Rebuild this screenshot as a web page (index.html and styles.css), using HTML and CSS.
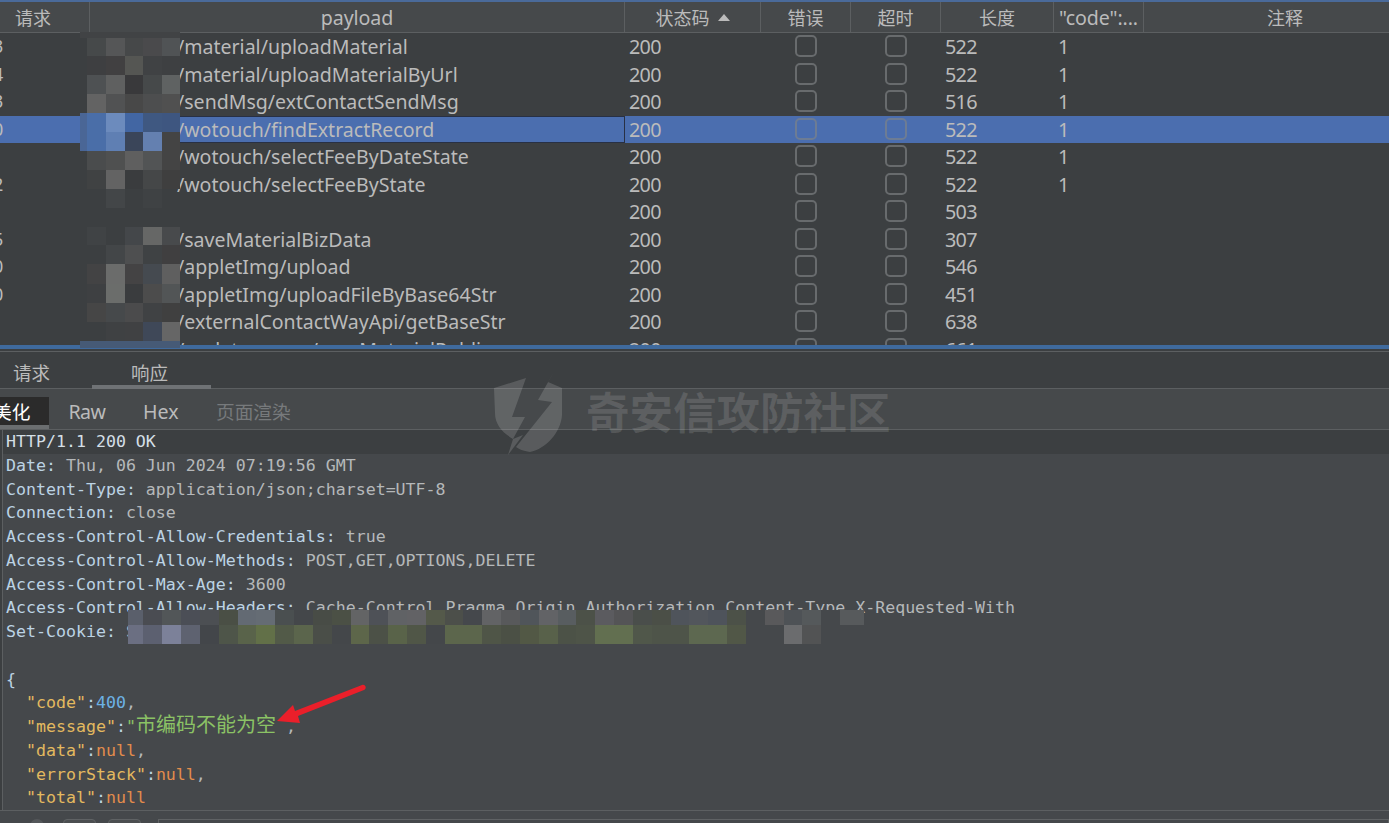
FILE: index.html
```html
<!DOCTYPE html>
<html lang="zh-CN">
<head>
<meta charset="utf-8">
<title>Intruder 结果</title>
<link rel="stylesheet" href="styles.css">
</head>
<body>
<div class="app">
  <div class="strip"></div>
  <section class="table">
    <div class="row head">
      <div class="th th-first">请求</div><div class="th lat">payload</div><div class="th sorted">状态码<i class="sort"></i></div><div class="th">错误</div><div class="th">超时</div><div class="th">长度</div><div class="th lat">"code":...</div><div class="th">注释</div>
    </div>
    <div class="row"><div class="td num"><span>3</span></div><div class="td path">/material/uploadMaterial</div><div class="td">200</div><div class="td box"><i></i></div><div class="td box"><i></i></div><div class="td">522</div><div class="td">1</div><div class="td"></div></div>
    <div class="row"><div class="td num"><span>4</span></div><div class="td path">/material/uploadMaterialByUrl</div><div class="td">200</div><div class="td box"><i></i></div><div class="td box"><i></i></div><div class="td">522</div><div class="td">1</div><div class="td"></div></div>
    <div class="row"><div class="td num"><span>3</span></div><div class="td path">/sendMsg/extContactSendMsg</div><div class="td">200</div><div class="td box"><i></i></div><div class="td box"><i></i></div><div class="td">516</div><div class="td">1</div><div class="td"></div></div>
    <div class="row selected"><div class="td num"><span>0</span></div><div class="td path focus">/wotouch/findExtractRecord</div><div class="td">200</div><div class="td box"><i></i></div><div class="td box"><i></i></div><div class="td">522</div><div class="td">1</div><div class="td"></div></div>
    <div class="row"><div class="td num"></div><div class="td path">/wotouch/selectFeeByDateState</div><div class="td">200</div><div class="td box"><i></i></div><div class="td box"><i></i></div><div class="td">522</div><div class="td">1</div><div class="td"></div></div>
    <div class="row"><div class="td num"><span>2</span></div><div class="td path">/wotouch/selectFeeByState</div><div class="td">200</div><div class="td box"><i></i></div><div class="td box"><i></i></div><div class="td">522</div><div class="td">1</div><div class="td"></div></div>
    <div class="row"><div class="td num"></div><div class="td path"></div><div class="td">200</div><div class="td box"><i></i></div><div class="td box"><i></i></div><div class="td">503</div><div class="td"></div><div class="td"></div></div>
    <div class="row"><div class="td num"><span>5</span></div><div class="td path">/saveMaterialBizData</div><div class="td">200</div><div class="td box"><i></i></div><div class="td box"><i></i></div><div class="td">307</div><div class="td"></div><div class="td"></div></div>
    <div class="row"><div class="td num"><span>0</span></div><div class="td path">/appletImg/upload</div><div class="td">200</div><div class="td box"><i></i></div><div class="td box"><i></i></div><div class="td">546</div><div class="td"></div><div class="td"></div></div>
    <div class="row"><div class="td num"><span>0</span></div><div class="td path">/appletImg/uploadFileByBase64Str</div><div class="td">200</div><div class="td box"><i></i></div><div class="td box"><i></i></div><div class="td">451</div><div class="td"></div><div class="td"></div></div>
    <div class="row"><div class="td num"></div><div class="td path">/externalContactWayApi/getBaseStr</div><div class="td">200</div><div class="td box"><i></i></div><div class="td box"><i></i></div><div class="td">638</div><div class="td"></div><div class="td"></div></div>
    <div class="row"><div class="td num"></div><div class="td path">/updatesource/saveMaterialPublic</div><div class="td">200</div><div class="td box"><i></i></div><div class="td box"><i></i></div><div class="td">661</div><div class="td"></div><div class="td"></div></div>
  </section>
  <div class="splitter"></div>
  <nav class="tabs">
    <span class="tab tab-req">请求</span>
    <span class="tab tab-res">响应</span>
  </nav>
  <nav class="subtabs">
    <span class="sub sub-on">美化</span>
    <span class="sub sub-raw">Raw</span>
    <span class="sub sub-hex">Hex</span>
    <span class="sub sub-off">页面渲染</span>
  </nav>
  <main class="editor">
    <div class="line first"><b class="h">HTTP/1.1 200 OK</b></div>
    <div class="line"><b class="k">Date:</b> Thu, 06 Jun 2024 07:19:56 GMT</div>
    <div class="line"><b class="k">Content-Type:</b> application/json;charset=UTF-8</div>
    <div class="line"><b class="k">Connection:</b> close</div>
    <div class="line"><b class="k">Access-Control-Allow-Credentials:</b> true</div>
    <div class="line"><b class="k">Access-Control-Allow-Methods:</b> POST,GET,OPTIONS,DELETE</div>
    <div class="line"><b class="k">Access-Control-Max-Age:</b> 3600</div>
    <div class="line"><b class="k">Access-Control-Allow-Headers:</b> Cache-Control,Pragma,Origin,Authorization,Content-Type,X-Requested-With</div>
    <div class="line"><b class="k">Set-Cookie:</b> S</div>
    <div class="line">&nbsp;</div>
    <div class="line"><b class="k">{</b></div>
    <div class="line">  <b class="y">"code"</b><b class="k">:</b><b class="n">400</b>,</div>
    <div class="line">  <b class="y">"message"</b><b class="k">:</b><b class="s">"<span class="cjk">市编码不能为空</span> </b>,</div>
    <div class="line">  <b class="y">"data"</b><b class="k">:</b><b class="o">null</b>,</div>
    <div class="line">  <b class="y">"errorStack"</b><b class="k">:</b><b class="o">null</b>,</div>
    <div class="line">  <b class="y">"total"</b><b class="k">:</b><b class="o">null</b></div>
  </main>
  <footer class="foot">
    <span class="fdot"></span><span class="fbtn"></span><span class="fbtn"></span><span class="finput"></span>
  </footer>

  <div class="wm-text">奇安信攻防社区</div>
  <svg class="overlay" viewBox="0 0 1389 823" aria-hidden="true">
    <g class="shield">
      <path d="M494 388L526 378L512 417L525 417L513 439C503 433 495 425 495 413Z"/>
      <path d="M556 368L548 382L562 388L562 415C561 432 546 449 530 452C523 451 519 449 516 447L552 402L538 400Z"/>
      <path d="M523 435L508 455L513 439Z"/>
    </g>
    <g>
      <rect x="80" y="32" width="100" height="6" fill="#414345"/>
      <rect x="87" y="38" width="19" height="18" fill="#46494a"/><rect x="106" y="38" width="19" height="18" fill="#555657"/><rect x="125" y="38" width="18" height="18" fill="#464849"/><rect x="143" y="38" width="19" height="18" fill="#4a4a4c"/><rect x="162" y="38" width="18" height="18" fill="#505355"/>
      <rect x="87" y="56" width="19" height="19" fill="#3e3f41"/><rect x="106" y="56" width="19" height="19" fill="#414041"/><rect x="125" y="56" width="18" height="19" fill="#555653"/><rect x="143" y="56" width="19" height="19" fill="#404244"/><rect x="162" y="56" width="18" height="19" fill="#3e4042"/>
      <rect x="87" y="75" width="19" height="19" fill="#4e5153"/><rect x="106" y="75" width="19" height="19" fill="#5f6060"/><rect x="125" y="75" width="18" height="19" fill="#39393b"/><rect x="143" y="75" width="19" height="19" fill="#46494a"/><rect x="162" y="75" width="18" height="19" fill="#5f6262"/>
      <rect x="87" y="94" width="19" height="19" fill="#636363"/><rect x="106" y="94" width="19" height="19" fill="#515253"/><rect x="125" y="94" width="18" height="19" fill="#484848"/><rect x="143" y="94" width="19" height="19" fill="#4d4e4f"/><rect x="162" y="94" width="18" height="19" fill="#505050"/>
      <rect x="80" y="113" width="7" height="38" fill="#4a6696"/>
      <rect x="87" y="113" width="19" height="19" fill="#4a6ea8"/><rect x="106" y="113" width="19" height="19" fill="#6c8bbd"/><rect x="125" y="113" width="18" height="19" fill="#4266a3"/><rect x="143" y="113" width="19" height="19" fill="#3f5881"/><rect x="162" y="113" width="18" height="19" fill="#3e5680"/>
      <rect x="87" y="132" width="19" height="19" fill="#4a6ea8"/><rect x="106" y="132" width="19" height="19" fill="#5f7fb3"/><rect x="125" y="132" width="18" height="19" fill="#3a4559"/><rect x="143" y="132" width="19" height="19" fill="#6480b0"/><rect x="162" y="132" width="18" height="19" fill="#444444"/>
      <rect x="87" y="151" width="19" height="19" fill="#4a4c4d"/><rect x="106" y="151" width="19" height="19" fill="#4f5050"/><rect x="125" y="151" width="18" height="19" fill="#5f5f5f"/><rect x="143" y="151" width="19" height="19" fill="#525455"/><rect x="162" y="151" width="18" height="19" fill="#444444"/>
      <rect x="87" y="170" width="19" height="19" fill="#404243"/><rect x="106" y="170" width="19" height="19" fill="#636363"/><rect x="125" y="170" width="18" height="19" fill="#3a3c3e"/><rect x="143" y="170" width="19" height="19" fill="#454748"/><rect x="162" y="170" width="18" height="19" fill="#3f3f3f"/>
      <rect x="106" y="189" width="19" height="19" fill="#434648"/><rect x="143" y="189" width="19" height="19" fill="#3f4244"/>
      <rect x="87" y="227" width="19" height="18" fill="#404345"/><rect x="125" y="227" width="18" height="18" fill="#44474a"/><rect x="143" y="227" width="19" height="18" fill="#666766"/><rect x="162" y="227" width="18" height="18" fill="#484a4c"/>
      <rect x="106" y="245" width="19" height="19" fill="#434648"/><rect x="125" y="245" width="18" height="19" fill="#4e4f50"/><rect x="143" y="245" width="19" height="19" fill="#3f4244"/><rect x="162" y="245" width="18" height="19" fill="#403f40"/>
      <rect x="87" y="264" width="19" height="20" fill="#434344"/><rect x="106" y="264" width="19" height="20" fill="#6b6c6b"/><rect x="125" y="264" width="18" height="20" fill="#444344"/><rect x="143" y="264" width="19" height="20" fill="#454a50"/><rect x="162" y="264" width="18" height="20" fill="#5f5f5f"/>
      <rect x="87" y="284" width="19" height="19" fill="#3e4042"/><rect x="106" y="284" width="19" height="19" fill="#6b6d6b"/><rect x="125" y="284" width="18" height="19" fill="#3a3c3e"/><rect x="143" y="284" width="19" height="19" fill="#4c4c4c"/><rect x="162" y="284" width="18" height="19" fill="#525556"/>
      <rect x="87" y="303" width="19" height="19" fill="#464646"/><rect x="106" y="303" width="19" height="19" fill="#46494b"/><rect x="125" y="303" width="18" height="19" fill="#4b4b4c"/><rect x="143" y="303" width="19" height="19" fill="#404244"/><rect x="162" y="303" width="18" height="19" fill="#404040"/>
      <rect x="106" y="322" width="19" height="19" fill="#3f4143"/><rect x="125" y="322" width="18" height="19" fill="#404143"/><rect x="143" y="322" width="19" height="19" fill="#3f4858"/><rect x="162" y="322" width="18" height="19" fill="#666666"/>
      <rect x="80" y="341" width="100" height="7" fill="#465a76"/>
    </g>
    <g>
      <rect x="128" y="610" width="15" height="15" fill="#5a5f6b"/><rect x="143" y="610" width="19" height="15" fill="#4a4c52"/><rect x="162" y="610" width="19" height="15" fill="#525658"/><rect x="181" y="610" width="19" height="15" fill="#4b4e56"/><rect x="200" y="610" width="19" height="15" fill="#4c4f53"/><rect x="219" y="610" width="19" height="15" fill="#4a4f45"/><rect x="238" y="610" width="18" height="15" fill="#636a73"/><rect x="256" y="610" width="19" height="15" fill="#656c74"/><rect x="275" y="610" width="19" height="15" fill="#4a4f50"/><rect x="294" y="610" width="19" height="15" fill="#44474a"/><rect x="313" y="610" width="19" height="15" fill="#484c46"/><rect x="332" y="610" width="19" height="15" fill="#4b5045"/><rect x="351" y="610" width="18" height="15" fill="#636465"/><rect x="369" y="610" width="19" height="15" fill="#4e5157"/><rect x="388" y="610" width="19" height="15" fill="#606265"/><rect x="407" y="610" width="19" height="15" fill="#626265"/><rect x="426" y="610" width="19" height="15" fill="#54594a"/><rect x="445" y="610" width="18" height="15" fill="#4c4f4a"/><rect x="463" y="610" width="19" height="15" fill="#45484c"/><rect x="482" y="610" width="19" height="15" fill="#626365"/><rect x="501" y="610" width="19" height="15" fill="#58595b"/><rect x="520" y="610" width="19" height="15" fill="#50555a"/><rect x="539" y="610" width="19" height="15" fill="#626366"/><rect x="558" y="610" width="18" height="15" fill="#585d60"/><rect x="576" y="610" width="19" height="15" fill="#4c5148"/><rect x="595" y="610" width="19" height="15" fill="#5b5b5f"/><rect x="614" y="610" width="19" height="15" fill="#545456"/><rect x="633" y="610" width="19" height="15" fill="#4a4e4b"/><rect x="652" y="610" width="19" height="15" fill="#4b4f47"/><rect x="671" y="610" width="18" height="15" fill="#4f545b"/><rect x="689" y="610" width="19" height="15" fill="#52565c"/><rect x="708" y="610" width="19" height="15" fill="#4e535b"/><rect x="727" y="610" width="19" height="15" fill="#4c5148"/><rect x="746" y="610" width="19" height="15" fill="#45484b"/><rect x="765" y="610" width="19" height="15" fill="#59595b"/><rect x="784" y="610" width="18" height="15" fill="#4e5256"/><rect x="802" y="610" width="19" height="15" fill="#55595b"/><rect x="821" y="610" width="19" height="15" fill="#45484b"/><rect x="840" y="610" width="24" height="15" fill="#575a5c"/>
      <rect x="128" y="625" width="15" height="19" fill="#6b6f82"/><rect x="143" y="625" width="19" height="19" fill="#5c6070"/><rect x="162" y="625" width="19" height="19" fill="#7c8199"/><rect x="181" y="625" width="19" height="19" fill="#5e6270"/><rect x="200" y="625" width="19" height="19" fill="#43464a"/><rect x="219" y="625" width="19" height="19" fill="#4e5549"/><rect x="238" y="625" width="18" height="19" fill="#59634a"/><rect x="256" y="625" width="19" height="19" fill="#627048"/><rect x="275" y="625" width="19" height="19" fill="#525a48"/><rect x="294" y="625" width="19" height="19" fill="#5b654c"/><rect x="313" y="625" width="19" height="19" fill="#4a4e48"/><rect x="332" y="625" width="19" height="19" fill="#44474a"/><rect x="351" y="625" width="18" height="19" fill="#5d664a"/><rect x="369" y="625" width="19" height="19" fill="#4c5147"/><rect x="388" y="625" width="19" height="19" fill="#596349"/><rect x="407" y="625" width="19" height="19" fill="#505647"/><rect x="426" y="625" width="19" height="19" fill="#44474a"/><rect x="445" y="625" width="37" height="19" fill="#5c664c"/><rect x="482" y="625" width="19" height="19" fill="#4f5547"/><rect x="501" y="625" width="19" height="19" fill="#4b5045"/><rect x="520" y="625" width="38" height="19" fill="#525845"/><rect x="539" y="625" width="19" height="19" fill="#58614a"/><rect x="558" y="625" width="18" height="19" fill="#4c5247"/><rect x="576" y="625" width="19" height="19" fill="#4e5448"/><rect x="595" y="625" width="38" height="19" fill="#626f50"/><rect x="633" y="625" width="19" height="19" fill="#50574a"/><rect x="652" y="625" width="37" height="19" fill="#4e5449"/><rect x="689" y="625" width="38" height="19" fill="#5d6850"/><rect x="727" y="625" width="19" height="19" fill="#515747"/><rect x="784" y="625" width="18" height="19" fill="#6b6c6e"/><rect x="802" y="625" width="19" height="19" fill="#525354"/>
    </g>
    <path class="arrow" d="M277 721L293 705L295 711L362 685C366 684 367 689 364 690L298 716L300 723Z"/>
  </svg>
</div>
</body>
</html>
```
FILE: styles.css
```css
* { box-sizing: border-box; }
html, body { margin: 0; padding: 0; background: #3c3f41; overflow: hidden; }
.app {
  position: relative;
  width: 1389px;
  height: 823px;
  display: flex;
  flex-direction: column;
  color: #bbbbbb;
  font-family: "Noto Sans", "Noto Sans CJK SC", sans-serif;
  font-size: 18px;
  overflow: hidden;
}
.strip { flex: none; height: 2px; background: #4a6a9a; }
.table { flex: none; height: 343px; overflow: hidden; background: #3c3f41; }
.row {
  display: grid;
  grid-template-columns: 90px 535px 136px 90px 90px 113px 90px 282px;
  height: 27.5px;
  align-items: stretch;
}
.row.head { height: 31px; background: #46494b; border-bottom: 1px solid #5c5f61; }
.th {
  display: flex;
  align-items: center;
  justify-content: center;
  border-right: 1px solid #5c5f61;
  white-space: nowrap;
  overflow: hidden;
}
.th:last-child { border-right: 0; }
.th-first { padding-right: 23px; }
.lat { font-size: 19.6px; letter-spacing: -0.1px; }
.sort {
  width: 0;
  height: 0;
  margin-left: 8px;
  border-left: 6px solid transparent;
  border-right: 6px solid transparent;
  border-bottom: 7px solid #bbbbbb;
}
.td {
  display: flex;
  align-items: center;
  padding: 0 0 0 4px;
  font-size: 19.8px;
  letter-spacing: -0.7px;
  white-space: nowrap;
  line-height: 27px;
  min-width: 0;
}
.num { padding-left: 0; overflow: hidden; font-size: 18px; }
.num span { margin-left: -7px; }
.path { padding-left: 87px; overflow: hidden; letter-spacing: 0; font-size: 19.55px; }
.box { justify-content: center; padding: 0 0 1px; }
.box i {
  display: block;
  width: 22px;
  height: 22px;
  border: 2px solid #686b6d;
  border-radius: 5px;
}
.selected { background: #4b6eaf; }
.selected .box i { border-color: #6d7c94; }
.focus { border: 1px solid #283044; padding-left: 86px; }
.splitter {
  flex: none;
  height: 7px;
  background: #3c3f41;
  border-top: 4px solid #3f6a9d;
  border-bottom: 1px solid #5c5f61;
}
.tabs {
  flex: none;
  height: 37px;
  background: #3c3f41;
  border-bottom: 1px solid #5c5f61;
  display: flex;
  font-size: 18.5px;
}
.tab { display: block; line-height: 42px; height: 37px; }
.tab-req { width: 92px; padding-left: 13px; }
.tab-res { width: 119px; text-align: center; padding-right: 4px; border-bottom: 4px solid #6f7275; }
.subtabs {
  flex: none;
  height: 41px;
  background: #46494b;
  border-bottom: 1px solid #5c5f61;
  display: flex;
  align-items: flex-end;
  font-size: 18.7px;
}
.sub { display: block; height: 32px; line-height: 30px; }
.sub-on {
  width: 49px;
  background: #2b2b2b;
  color: #ffffff;
  border-bottom: 4px solid #6b6e70;
  text-indent: -7px;
  overflow: hidden;
}
.sub-raw { margin-left: 19.5px; width: 74.5px; font-size: 19.6px; letter-spacing: -0.6px; }
.sub-hex { width: 73px; font-size: 19.6px; }
.sub-off { color: #777a7c; }
.editor {
  flex: 1;
  min-height: 0;
  background: #45484b;
  border-left: 1px solid #5c5f61;
  margin-left: 2px;
  font-family: "DejaVu Sans Mono", monospace;
  font-size: 16.6px;
  overflow: hidden;
}
.line {
  height: 23.75px;
  line-height: 23.75px;
  padding-left: 3px;
  white-space: pre;
  color: #b5b8ba;
}
.line.first { background: #3c3f41; }
.line b { font-weight: normal; }
.h { color: #d4dfe6; }
.k { color: #bcd3e4; }
.y { color: #e3b95f; }
.n { color: #6cb2e4; }
.s { color: #8bc265; }
.o { color: #e28c4c; }
.cjk { font-family: "Noto Sans CJK SC", sans-serif; font-size: 20px; line-height: 0; }
.foot {
  flex: none;
  height: 13px;
  background: #45484b;
  border-top: 1px solid #5c5f61;
  display: flex;
  padding: 8px 0 0 30px;
  gap: 12px;
}
.fdot { width: 14px; height: 14px; margin-right: 7px; border-radius: 50%; background: #54575a; }
.fbtn { width: 33px; height: 12px; border: 1px solid #5f6264; border-radius: 4px; background: #4b4e50; }
.finput { margin-left: 5px; flex: 1; height: 12px; border: 1px solid #5f6264; background: #45484b; }
.overlay { position: absolute; left: 0; top: 0; width: 1389px; height: 823px; pointer-events: none; }
.shield { fill: #ffffff; fill-opacity: 0.15; }
.arrow { fill: #ea1f2a; }
.wm-text {
  position: absolute;
  left: 586px;
  top: 385px;
  font-family: "Noto Sans CJK SC", sans-serif;
  font-weight: 700;
  font-size: 43.5px;
  line-height: 52px;
  white-space: nowrap;
  color: rgba(255, 255, 255, 0.12);
}
```
